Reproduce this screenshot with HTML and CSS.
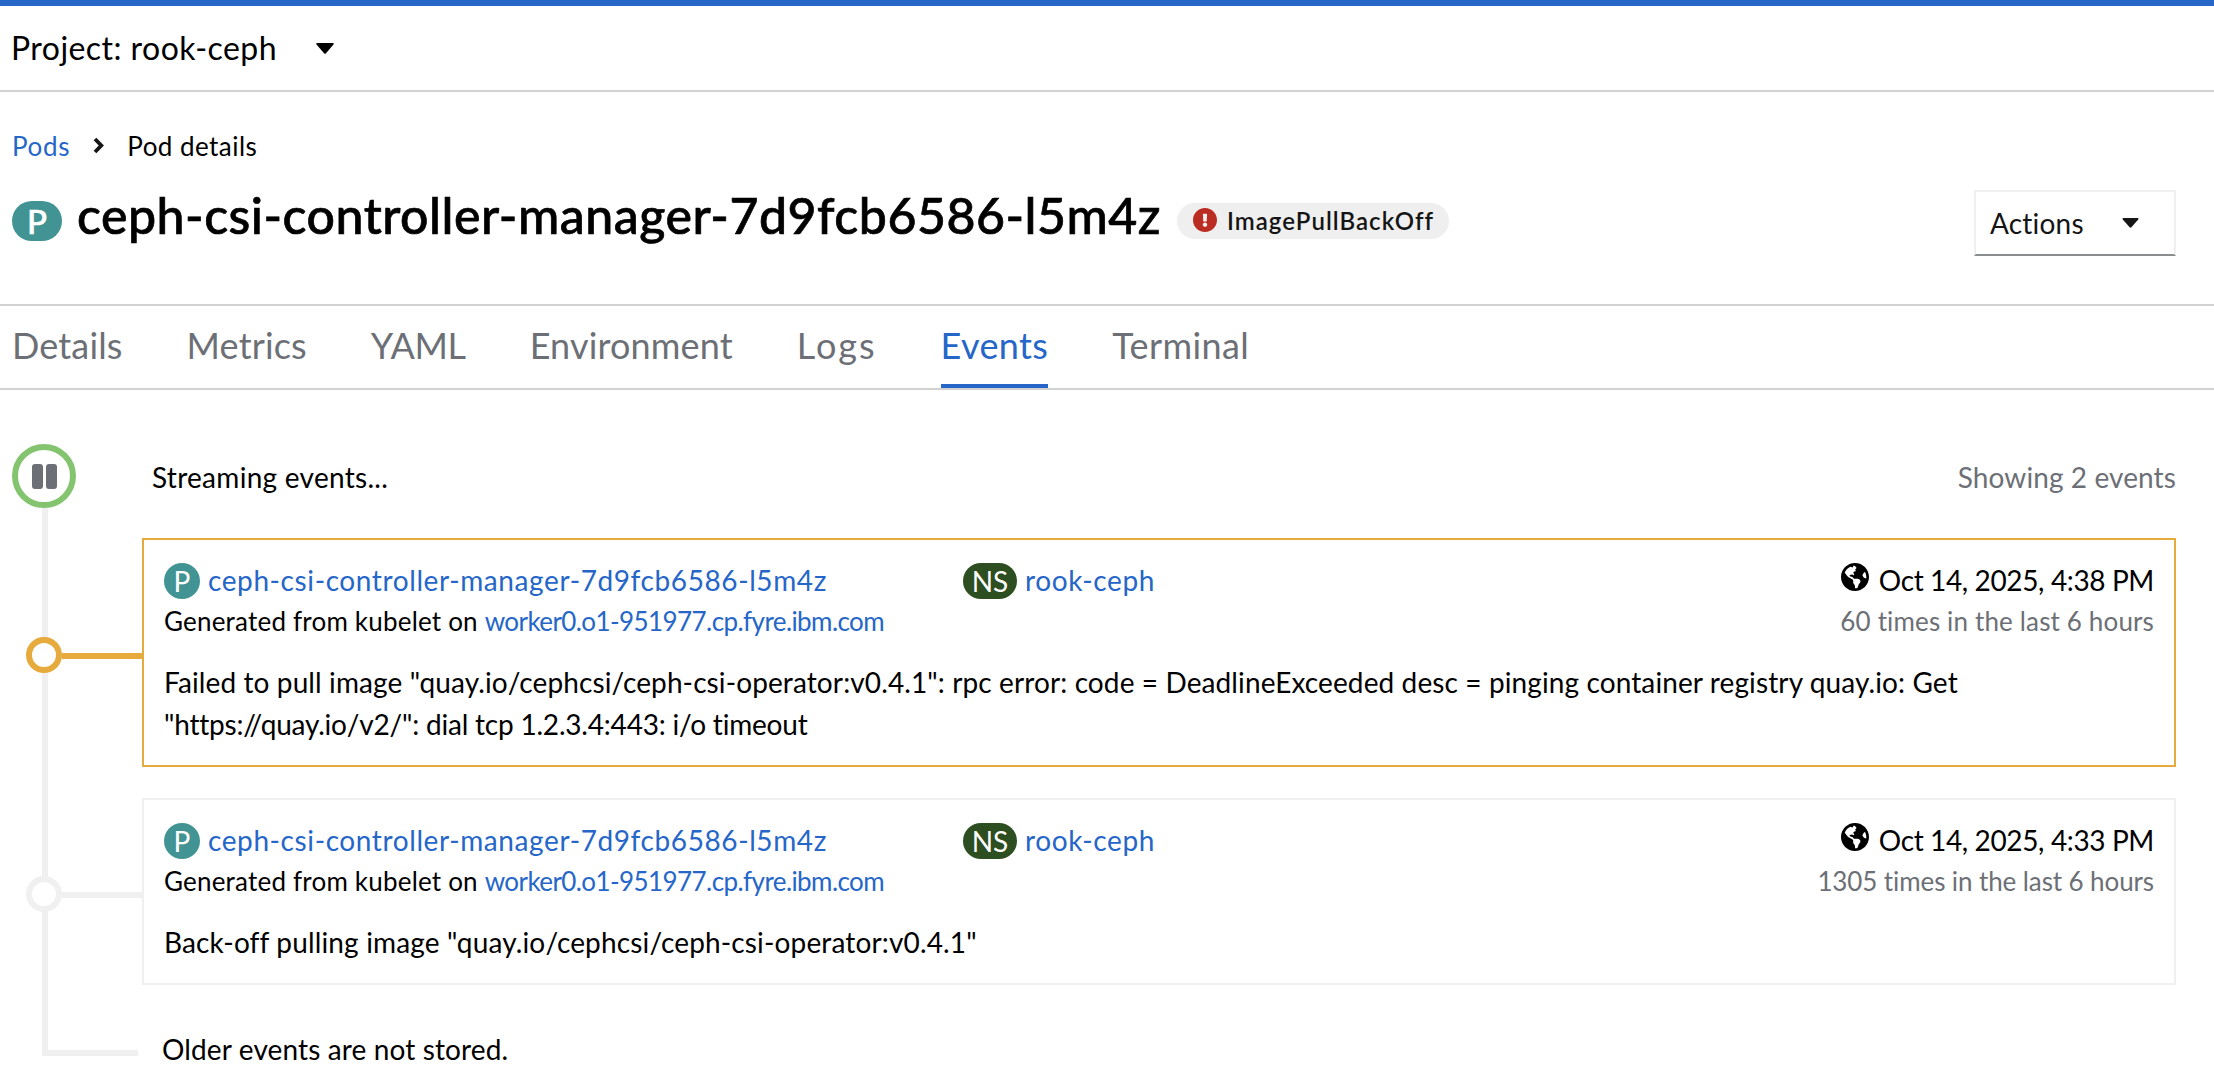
FILE: index.html
```html
<!DOCTYPE html>
<html lang="en">
<head>
<meta charset="utf-8">
<title>ceph-csi-controller-manager-7d9fcb6586-l5m4z · Events</title>
<link rel="stylesheet" href="styles.css">
</head>
<body>
<svg class="sprite" aria-hidden="true">
  <symbol id="caret" viewBox="0 0 18 11"><path d="M1.2 0h15.6q1.6.2.7 1.6L10 10.3q-1 1-2 0L.5 1.6Q-.4.2 1.2 0z"/></symbol>
  <symbol id="globe" viewBox="0 8 496 496"><path d="M248 8C111.03 8 0 119.03 0 256s111.03 248 248 248 248-111.03 248-248S384.97 8 248 8zm82.29 357.6c-3.9 3.88-7.99 7.95-11.31 11.28-2.99 3-5.1 6.7-6.17 10.71-1.51 5.66-2.73 11.38-4.77 16.87l-17.39 46.85c-13.76 3-28 4.69-42.65 4.69v-27.38c1.69-12.62-7.64-36.26-22.63-51.25-6-6-9.37-14.14-9.37-22.63v-32.01c0-11.64-6.27-22.34-16.46-27.97-14.37-7.95-34.81-19.06-48.81-26.11-11.48-5.78-22.1-13.14-31.65-21.75l-.8-.72a114.792 114.792 0 0 1-18.06-20.74c-9.38-13.77-24.66-36.42-34.59-51.14 20.47-45.5 57.36-82.04 103.2-101.89l24.01 12.01C203.48 89.74 216 82.01 216 70.11v-11.3c7.99-1.29 16.12-2.11 24.39-2.42l28.3 28.3c6.25 6.25 6.25 16.38 0 22.63L264 112l-10.34 10.34c-3.12 3.12-3.12 8.19 0 11.31l4.69 4.69c3.12 3.12 3.12 8.19 0 11.31l-8 8a8.008 8.008 0 0 1-5.66 2.34h-8.99c-2.08 0-4.08.81-5.58 2.27l-9.92 9.65a8.008 8.008 0 0 0-1.58 9.31l15.59 31.19c2.66 5.32-1.21 11.58-7.15 11.58h-5.64c-1.93 0-3.79-.7-5.24-1.96l-9.28-8.06a16.017 16.017 0 0 0-15.55-3.1l-31.17 10.39a11.95 11.95 0 0 0-8.17 11.34c0 4.53 2.56 8.66 6.61 10.69l11.08 5.54c9.41 4.71 19.79 7.16 30.31 7.16s22.59 27.29 32 32h66.75c8.49 0 16.62 3.37 22.63 9.37l13.69 13.69a30.503 30.503 0 0 1 8.93 21.57 46.536 46.536 0 0 1-13.72 32.98zM417 274.25c-5.79-1.45-10.84-5-14.15-9.97l-17.98-26.97a23.97 23.97 0 0 1 0-26.62l19.59-29.38c2.32-3.47 5.5-6.29 9.24-8.15l12.98-6.49C440.2 193.59 448 223.87 448 256c0 8.67-.74 17.16-1.82 25.54L417 274.25z"/></symbol>
</svg>

<header class="project-bar">
  <button class="project-toggle">Project: rook-ceph <svg class="caret"><use href="#caret"/></svg></button>
</header>

<section class="heading">
  <nav class="breadcrumb">
    <a href="#">Pods</a>
    <svg class="chevron" viewBox="0 0 11 17"><path d="M2 2l6.3 6.5L2 15"/></svg>
    <span>Pod details</span>
  </nav>
  <div class="title-row">
    <span class="badge badge-pod badge-large">P</span>
    <h1>ceph-csi-controller-manager-7d9fcb6586-l5m4z</h1>
    <span class="status">
      <svg viewBox="8 8 496 496"><path d="M504 256c0 136.997-111.043 248-248 248S8 392.997 8 256C8 119.083 119.043 8 256 8s248 111.083 248 248zm-248 50c-25.405 0-46 20.595-46 46s20.595 46 46 46 46-20.595 46-46-20.595-46-46-46zm-43.673-165.346l7.418 136c.347 6.364 5.609 11.346 11.982 11.346h48.546c6.373 0 11.635-4.982 11.982-11.346l7.418-136c.375-6.874-5.098-12.654-11.982-12.654h-63.383c-6.884 0-12.356 5.78-11.981 12.654z"/></svg>
      <span>ImagePullBackOff</span>
    </span>
    <button class="actions">Actions <svg class="caret"><use href="#caret"/></svg></button>
  </div>
</section>

<nav class="tabs">
  <a href="#" class="snug">Details</a>
  <a href="#" class="snug">Metrics</a>
  <a href="#" class="tight">YAML</a>
  <a href="#" class="snug">Environment</a>
  <a href="#" class="wide">Logs</a>
  <a href="#" class="active">Events</a>
  <a href="#">Terminal</a>
</nav>

<main class="stream">
  <div class="stream-bar">
    <button class="pause" aria-label="Pause"><i></i><i></i></button>
    <span class="stream-state">Streaming events...</span>
    <span class="stream-count">Showing 2 events</span>
  </div>

  <div class="timeline">
    <div class="event warning">
      <span class="node"></span><span class="connector"></span>
      <article class="card">
        <div class="card-head">
          <div class="resource"><span class="badge badge-pod">P</span><a class="pod-link" href="#">ceph-csi-controller-manager-7d9fcb6586-l5m4z</a></div>
          <div class="resource"><span class="badge badge-ns">NS</span><a class="ns-link" href="#">rook-ceph</a></div>
          <div class="time"><svg class="globe"><use href="#globe"/></svg><span>Oct 14, 2025, 4:38 PM</span></div>
        </div>
        <div class="card-sub">
          <span>Generated from kubelet on <a class="node-link" href="#">worker0.o1-951977.cp.fyre.ibm.com</a></span>
          <span class="repeat">60 times in the last 6 hours</span>
        </div>
        <p class="message">Failed to pull image "quay.io/cephcsi/ceph-csi-operator:v0.4.1": rpc error: code = DeadlineExceeded desc = pinging container registry quay.io: Get <span class="message-url">"https://quay.io/v2/": dial tcp 1.2.3.4:443: i/o timeout</span></p>
      </article>
    </div>

    <div class="event">
      <span class="node"></span><span class="connector"></span>
      <article class="card">
        <div class="card-head">
          <div class="resource"><span class="badge badge-pod">P</span><a class="pod-link" href="#">ceph-csi-controller-manager-7d9fcb6586-l5m4z</a></div>
          <div class="resource"><span class="badge badge-ns">NS</span><a class="ns-link" href="#">rook-ceph</a></div>
          <div class="time"><svg class="globe"><use href="#globe"/></svg><span>Oct 14, 2025, 4:33 PM</span></div>
        </div>
        <div class="card-sub">
          <span>Generated from kubelet on <a class="node-link" href="#">worker0.o1-951977.cp.fyre.ibm.com</a></span>
          <span class="repeat repeat-long">1305 times in the last 6 hours</span>
        </div>
        <p class="message message-short">Back-off pulling image "quay.io/cephcsi/ceph-csi-operator:v0.4.1"</p>
      </article>
    </div>

    <div class="timeline-end">Older events are not stored.</div>
  </div>
</main>
</body>
</html>
```
FILE: styles.css
```css
:root {
  --blue: #2566c8;
  --teal: #429494;
  --green-dark: #2c4e20;
  --gold: #e6ab3c;
  --muted: #6c7076;
  --line: #d2d2d2;
  --faint: #f0f0f0;
}

* { box-sizing: border-box; }

body {
  margin: 0;
  height: 1076px;
  overflow: hidden;
  border-top: 6px solid var(--blue);
  background: #fff;
  color: #000;
  font-family: Lato, "Open Sans", sans-serif;
  font-size: 28px;
}

a { color: var(--blue); text-decoration: none; }
button { border: 0; padding: 0; background: none; font: inherit; color: inherit; }
svg { display: block; flex: none; fill: currentColor; }
.sprite { display: none; }

.project-bar { height: 86px; padding-left: 11px; border-bottom: 2px solid var(--line); }
.project-toggle {
  display: flex;
  align-items: center;
  gap: 39px;
  height: 82px;
  font-size: 32px;
  letter-spacing: .45px;
}
.caret { width: 18px; height: 11px; }
.project-toggle .caret { margin-top: 3px; }

.heading { height: 212px; padding: 34px 38px 0 12px; }
.breadcrumb {
  display: flex;
  align-items: center;
  height: 40px;
  font-size: 26px;
  letter-spacing: .45px;
}
.breadcrumb a { letter-spacing: .7px; }
.chevron { width: 11px; height: 17px; margin: -2px 23px 0 23px; fill: none; stroke: #151515; stroke-width: 3.8; }

.title-row { display: flex; align-items: flex-start; margin-top: 17px; }
h1 {
  margin: 1px 0 0 15px;
  font-size: 50px;
  font-weight: 500;
  line-height: 62px;
  letter-spacing: .5px;
  white-space: nowrap;
  -webkit-text-stroke: .7px #000;
}

.badge {
  flex: none;
  display: flex;
  align-items: center;
  justify-content: center;
  width: 36px;
  height: 36px;
  border-radius: 18px;
  color: #fff;
}
.badge-pod { background: var(--teal); }
.badge-ns { width: 54px; background: var(--green-dark); }
.badge-large { width: 50px; height: 40px; margin-top: 18px; border-radius: 20px; font-size: 33px; font-weight: 500; line-height: 38px; -webkit-text-stroke: .6px #fff; }

.status {
  display: flex;
  align-items: center;
  gap: 10px;
  height: 36px;
  margin: 20px auto 0 16px;
  padding: 0 15px 0 16px;
  border-radius: 18px;
  background: #efefef;
  color: #151515;
  font-size: 24px;
  font-weight: 600;
  letter-spacing: 1.05px;
}
.status span { margin-top: -2px; }
.status svg { width: 24px; height: 24px; margin-bottom: 2px; fill: #bb2d22; }

.actions {
  display: flex;
  align-items: center;
  justify-content: space-between;
  width: 202px;
  height: 66px;
  margin-top: 7px;
  padding: 0 35px 0 14px;
  border: 2px solid var(--faint);
  border-bottom-color: #8a8d90;
  color: #151515;
  letter-spacing: .2px;
}
.actions .caret { width: 17px; height: 10px; }

.tabs {
  display: flex;
  gap: 64px;
  height: 86px;
  padding-left: 12px;
  border: solid var(--line);
  border-width: 2px 0;
}
.tabs a {
  height: 82px;
  border-bottom: 4px solid transparent;
  color: var(--muted);
  font-size: 36px;
  line-height: 78px;
  letter-spacing: .4px;
}
.tabs .snug { letter-spacing: .15px; }
.tabs .tight { letter-spacing: -.35px; }
.tabs .wide { letter-spacing: 2px; }
.tabs .active { color: var(--blue); border-color: var(--blue); }

.stream { padding: 54px 38px 0 12px; }
.stream-bar { display: flex; align-items: center; height: 64px; line-height: 36px; }
.pause {
  display: flex;
  align-items: center;
  justify-content: center;
  gap: 3px;
  width: 64px;
  height: 64px;
  border: 6px solid #84c46f;
  border-radius: 50%;
}
.pause i { width: 11px; height: 25px; border-radius: 3px; background: var(--muted); }
.stream-state { margin: 1px 0 0 76px; letter-spacing: .28px; }
.stream-count { margin: 1px 0 0 auto; color: var(--muted); letter-spacing: .1px; }

.timeline { position: relative; height: 548px; padding-top: 30px; }
.timeline::before {
  content: "";
  position: absolute;
  inset: 0 auto 0 30px;
  width: 90px;
  border: solid var(--faint);
  border-width: 0 0 6px 6px;
}

.event { --tone: var(--faint); position: relative; display: flex; align-items: center; margin: 0 0 31px 14px; }
.event.warning { --tone: var(--gold); }
.node { width: 36px; height: 36px; margin-top: 5px; border: 6px solid var(--tone); border-radius: 50%; background: #fff; }
.connector { width: 80px; height: 6px; margin-top: 7px; background: var(--tone); }
.card { flex: 1; padding: 23px 20px 20px; border: 2px solid var(--tone); background: #fff; }

.card-head { display: grid; grid-template-columns: 799px 1fr auto; height: 36px; line-height: 35px; }
.resource { display: flex; gap: 8px; }
.pod-link { letter-spacing: .6px; }
.ns-link { letter-spacing: .6px; }
.time { display: flex; gap: 10px; letter-spacing: -.37px; }
.globe { width: 28px; height: 28px; }

.card-sub { display: flex; justify-content: space-between; margin-top: 4px; font-size: 26px; line-height: 36px; letter-spacing: .2px; }
.node-link { letter-spacing: -.58px; }
.repeat { color: var(--muted); letter-spacing: .15px; }
.repeat-long { letter-spacing: -.1px; }
.message { margin: 22px 0 0; line-height: 42px; letter-spacing: .11px; }
.message-short { letter-spacing: .15px; }
.message-url { letter-spacing: -.2px; }

.timeline-end { margin: 43px 0 0 150px; line-height: 42px; letter-spacing: .13px; }
```
